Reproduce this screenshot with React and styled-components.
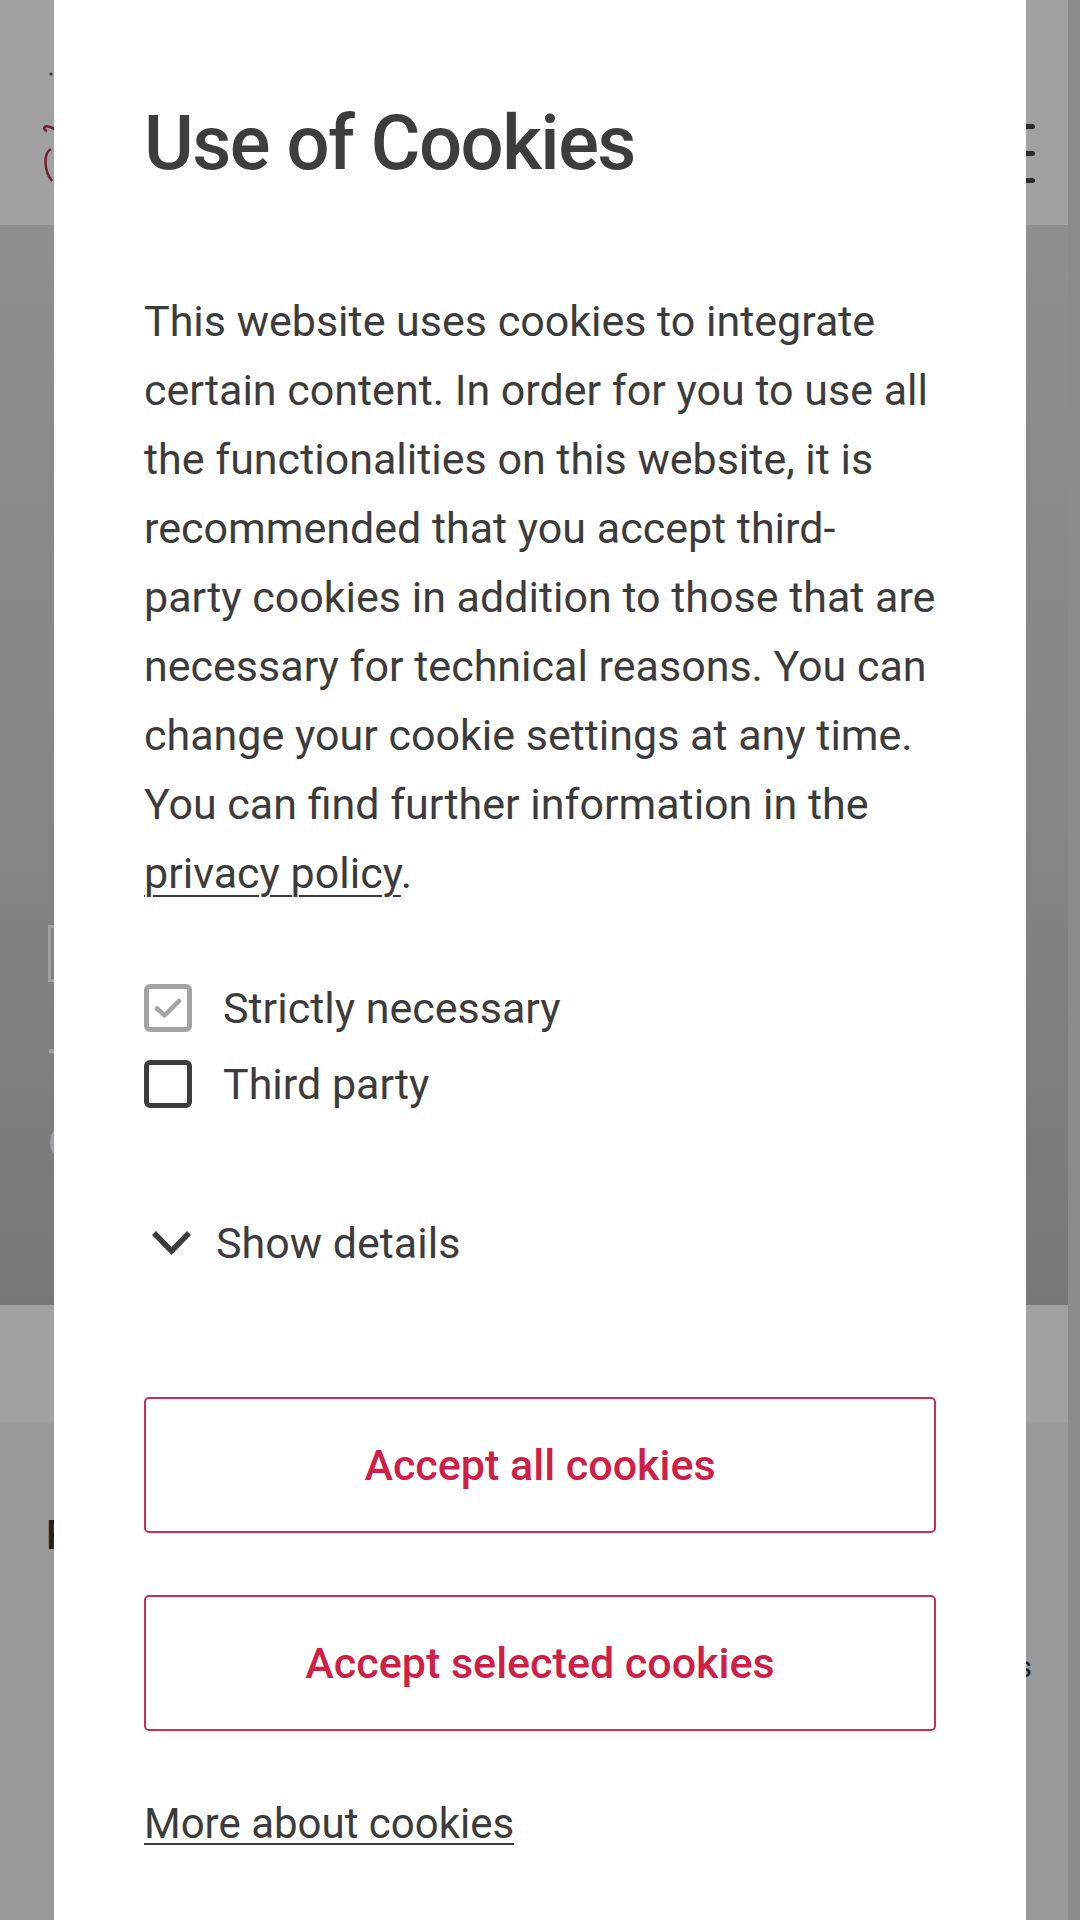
import React, { useState } from 'react'
import styled, { createGlobalStyle } from 'styled-components'

const GlobalStyle = createGlobalStyle`
        html, body {
                margin: 0;
                padding: 0;
                font-family: Roboto, "Liberation Sans", sans-serif;
                overflow: hidden;
        }
`;

const Page = styled.div`
        display: flex;
        height: 1920px;
        overflow: hidden;
        background: #f4f4f4;
`;

const PageMain = styled.div`
        flex: 1;
        display: flex;
        flex-direction: column;
`;

const Scrollbar = styled.div`
        width: 12px;
        background: #dcdcdc;
`;

const Header = styled.header`
        flex-shrink: 0;
        height: 225px;
        background: #fff;
        display: flex;
        align-items: center;
        justify-content: space-between;
        padding: 0 33px 0 34px;
`;

const Burger = styled.div`
        display: flex;
        flex-direction: column;
        gap: 22px;
        margin-top: 82px;
`;

const BurgerBar = styled.span`
        display: block;
        width: 32px;
        height: 5px;
        border-radius: 3px;
        background: #444;
`;

const Hero = styled.section`
        flex-shrink: 0;
        height: 1080px;
        box-sizing: border-box;
        background: linear-gradient(180deg, #e2e2e2 0%, #d2d2d2 60%, #bdbdbd 100%);
        display: flex;
        flex-direction: column;
        justify-content: flex-end;
        padding: 0 0 138px 48px;
        color: #fff;
`;

const HeroTag = styled.div`
        align-self: flex-start;
        border: 3px solid #fff;
        padding: 8px 16px;
        font-size: 30px;
        margin-bottom: 58px;
`;

const HeroTitle = styled.h2`
        margin: 0 0 28px;
        font-size: 44px;
        font-weight: 500;
`;

const HeroSub = styled.p`
        margin: 0;
        font-size: 40px;
`;

const Band = styled.div`
        flex-shrink: 0;
        height: 117px;
        background: #fff;
`;

const Content = styled.section`
        flex-shrink: 0;
        padding: 90px 36px 0 46px;
        color: #333;
        font-size: 40px;
`;

const ContentHeading = styled.h3`
        margin: 0 0 90px;
        font-size: 40px;
        font-weight: 500;
`;

const ContentText = styled.p`
        margin: 0 0 282px;
        text-align: right;
        font-size: 30px;
`;

const Overlay = styled.div`
        position: fixed;
        inset: 0;
        background: rgba(0, 0, 0, 0.37);
        display: flex;
        justify-content: center;
`;

const Modal = styled.div`
        width: 972px;
        height: 100%;
        background: #fff;
        box-sizing: border-box;
        padding: 98px 90px 0;
        color: #3c3c3c;
        display: flex;
        flex-direction: column;
`;

const Title = styled.h1`
        margin: 0;
        font-size: 76px;
        line-height: 91px;
        font-weight: 500;
        letter-spacing: -1.5px;
        color: #3d3d3d;
`;

const Text = styled.p`
        margin: 98px -14px 0 0;
        font-size: 43px;
        line-height: 69px;
        font-weight: 400;
`;

const Link = styled.a`
        color: inherit;
        text-decoration: underline;
        text-decoration-thickness: 2px;
        text-underline-offset: ${props => props.offset || 7}px;
        cursor: pointer;
`;

const Options = styled.div`
        margin-top: 76px;
        display: flex;
        flex-direction: column;
        gap: 28px;
`;

const Option = styled.label`
        display: flex;
        align-items: center;
        gap: 31px;
        height: 48px;
        font-size: 43px;
        cursor: ${props => props.disabled ? 'default' : 'pointer'};
`;

const Box = styled.span`
        width: 48px;
        height: 48px;
        box-sizing: border-box;
        border: 5px solid ${props => props.muted ? '#a3a3a3' : '#3c3c3c'};
        border-radius: 6px;
        display: flex;
        align-items: center;
        justify-content: center;
        flex-shrink: 0;
`;

const Details = styled.button`
        margin-top: 100px;
        align-self: flex-start;
        display: flex;
        align-items: center;
        gap: 24px;
        padding: 0 0 0 7px;
        height: 69px;
        border: none;
        background: none;
        font-family: inherit;
        font-size: 43px;
        color: #3c3c3c;
        cursor: pointer;
`;

const Buttons = styled.div`
        margin-top: 120px;
        display: flex;
        flex-direction: column;
        gap: 62px;
`;

const Button = styled.button`
        height: 136px;
        border: 2px solid #c9304f;
        border-radius: 5px;
        background: #fff;
        font-family: inherit;
        font-size: 43px;
        font-weight: 500;
        color: #cf1f47;
        cursor: pointer;
`;

const More = styled(Link)`
        margin-top: 58px;
        align-self: flex-start;
        font-size: 42px;
        line-height: 69px;
`;

const Check = ({ color }) => (
        <svg width="28" height="22" viewBox="0 0 28 22" fill="none">
                <path d="M3 11.5 L10.5 18.5 L25 4" stroke={color} strokeWidth="4.5" strokeLinecap="round" strokeLinejoin="round" />
        </svg>
)

const Logo = () => (
        <svg width="60" height="140" viewBox="0 0 60 140" fill="none">
                <circle cx="17" cy="31" r="1.5" fill="#555" />
                <path d="M13 88 C8 86 10 82 16 84 C22 86 24 88 22 90" stroke="#b8314f" strokeWidth="2.5" />
                <path d="M17 106 C9 110 10 128 18 138" stroke="#b8314f" strokeWidth="2.5" />
        </svg>
)

const App = () => {
        const [third, setThird] = useState(false);

        return (
                <>
                        <GlobalStyle />
                        <Page>
                                <PageMain>
                                        <Header>
                                                <Logo />
                                                <Burger>
                                                        <BurgerBar />
                                                        <BurgerBar />
                                                        <BurgerBar />
                                                </Burger>
                                        </Header>
                                        <Hero>
                                                <HeroTag>News</HeroTag>
                                                <HeroTitle>The future of mobility</HeroTitle>
                                                <HeroSub>Connected solutions</HeroSub>
                                        </Hero>
                                        <Band />
                                        <Content>
                                                <ContentHeading>For our customers</ContentHeading>
                                                <ContentText>Read more about our services</ContentText>
                                                <ContentHeading>Topics</ContentHeading>
                                        </Content>
                                </PageMain>
                                <Scrollbar />
                        </Page>

                        <Overlay>
                                <Modal>
                                        <Title>Use of Cookies</Title>
                                        <Text>
                                                This website uses cookies to integrate certain content. In order for you to use all the functionalities on this website, it is recommended that you accept third-<br />party cookies in addition to those that are necessary for technical reasons. You can change your cookie settings at any time. You can find further information in the <Link>privacy policy</Link>.
                                        </Text>

                                        <Options>
                                                <Option disabled>
                                                        <Box muted><Check color="#a3a3a3" /></Box>
                                                        Strictly necessary
                                                </Option>
                                                <Option onClick={() => setThird(!third)}>
                                                        <Box>{third && <Check color="#3c3c3c" />}</Box>
                                                        Third party
                                                </Option>
                                        </Options>

                                        <Details>
                                                <svg width="41" height="25" viewBox="0 0 41 25" fill="none">
                                                        <path d="M3 3 L20.5 21 L38 3" stroke="#3c3c3c" strokeWidth="5.5" strokeLinecap="butt" />
                                                </svg>
                                                Show details
                                        </Details>

                                        <Buttons>
                                                <Button>Accept all cookies</Button>
                                                <Button>Accept selected cookies</Button>
                                        </Buttons>

                                        <More offset={5}>More about cookies</More>
                                </Modal>
                        </Overlay>
                </>
        )
}

export default App
